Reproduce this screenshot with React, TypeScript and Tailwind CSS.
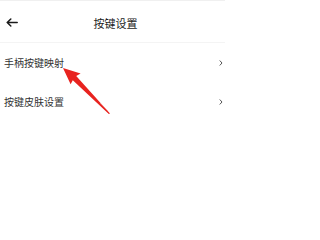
export default function App() {
  const rows = ["手柄按键映射", "按键皮肤设置"];

  return (
    <div
      className="relative w-[225px] h-[237px] bg-white overflow-hidden"
      style={{ fontFamily: '"Noto Sans CJK SC", "Noto Sans", sans-serif' }}
    >
      {/* header */}
      <div className="border-t border-[#f0f0f0]">
        <div className="relative flex items-center h-[42px] border-b border-[#f4f4f4]">
          <svg
            className="ml-[6px] mt-[2px]"
            width="12"
            height="9"
            viewBox="0 0 12 9"
            fill="none"
            stroke="#1a1a1a"
            strokeWidth="1.5"
            strokeLinecap="round"
            strokeLinejoin="round"
          >
            <path d="M11.2 4.5H1.2M4.8 1L1.2 4.5L4.8 8" />
          </svg>
          <span className="absolute left-0 right-0 text-center text-[11px] leading-none text-[#222] mt-[4px] pl-[6px]">
            按键设置
          </span>
        </div>
      </div>

      {/* list */}
      <div className="flex flex-col">
        {rows.map((r) => (
          <div key={r} className="flex items-center justify-between h-[39px] pl-[4px] pr-[2px]">
            <span className="text-[10px] leading-none text-[#333]">{r}</span>
            <svg width="4" height="6" viewBox="0 0 4 6" fill="none" stroke="#555" strokeWidth="1" strokeLinecap="round">
              <path d="M1 0.8L3 3L1 5.2" />
            </svg>
          </div>
        ))}
      </div>

      {/* red annotation arrow */}
      <svg
        className="absolute left-0 top-0 pointer-events-none"
        width="225"
        height="237"
        viewBox="0 0 225 237"
      >
        <polygon
          points="110,113.5 108.8,114 72.8,80.2 70.6,84.2 63,68 80.6,73.6 76.2,76"
          fill="#e8231f"
        />
        <path d="M100 103 L108 111" stroke="#f39a96" strokeWidth="1" opacity="0.6" />
      </svg>
    </div>
  );
}
